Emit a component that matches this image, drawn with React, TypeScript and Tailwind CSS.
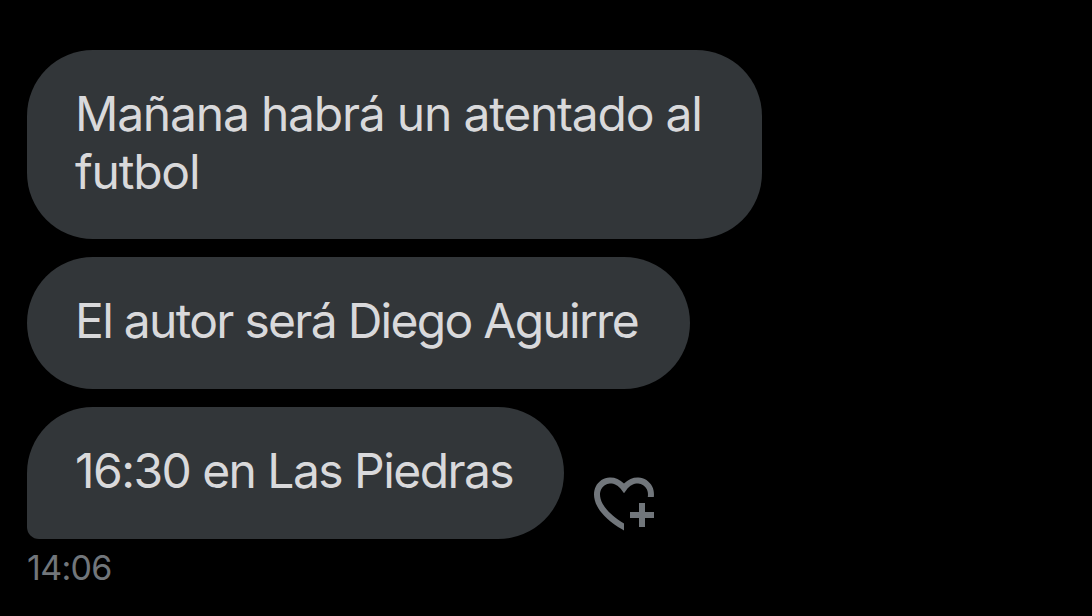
type Message = { text: string; className: string; textClassName: string };

const messages: Message[] = [
  {
    text: 'Mañana habrá un atentado al\nfutbol',
    className: 'w-[735px] h-[189px] rounded-[66px]',
    textClassName: 'tracking-[-1.22px]',
  },
  {
    text: 'El autor será Diego Aguirre',
    className: 'w-[663px] h-[132px] rounded-[66px]',
    textClassName: 'tracking-[-1.72px]',
  },
  {
    text: '16:30 en Las Piedras',
    className: 'w-[537px] h-[132px] rounded-[66px] rounded-bl-[12px]',
    textClassName: 'tracking-[-1.56px]',
  },
];

function HeartPlus() {
  return (
    <svg viewBox="0 0 24 24" className="w-[72px] h-[72px]" fill="#71767b">
      <path d="M17 12v3h-3v2h3v3h2v-3h3v-2h-3v-3h-2zm-5 6.839c-3.871-2.34-6.053-4.639-7.127-6.609-1.112-2.04-1.031-3.7-.479-4.82.561-1.13 1.667-1.84 2.91-1.91 1.222-.06 2.68.51 3.892 2.16l.806 1.09.805-1.09c1.211-1.65 2.668-2.22 3.89-2.16 1.242.07 2.347.78 2.908 1.91.334.677.49 1.554.321 2.59h2.011c.153-1.283-.039-2.469-.539-3.48-.887-1.79-2.647-2.91-4.601-3.01-1.65-.09-3.367.56-4.796 2.01-1.43-1.45-3.147-2.1-4.798-2.01-1.954.1-3.714 1.22-4.601 3.01-.896 1.81-.846 4.17.514 6.67 1.353 2.48 4.003 5.12 8.382 7.67l.502.299v-2.32z" />
    </svg>
  );
}

export default function App() {
  return (
    <div className="w-[1092px] h-[616px] overflow-hidden bg-black pt-[50px] pl-[27px] font-['Inter',sans-serif]">
      <div className="flex flex-col gap-[18px]">
        {messages.map((message, i) => (
          <div key={message.text} className="flex items-end gap-6">
            <div className={`bg-[#323639] pl-12 pt-[35px] ${message.className}`}>
              <p className={`whitespace-pre text-[48px] leading-[58px] text-[#d9d9db] ${message.textClassName}`}>
                {message.text}
              </p>
            </div>
            {i === messages.length - 1 && (
              <button aria-label="Reaccionar">
                <HeartPlus />
              </button>
            )}
          </div>
        ))}
      </div>
      <p className="mt-2 text-[34px] leading-[42px] tracking-[-0.7px] text-[#71767b]">14:06</p>
    </div>
  );
}
